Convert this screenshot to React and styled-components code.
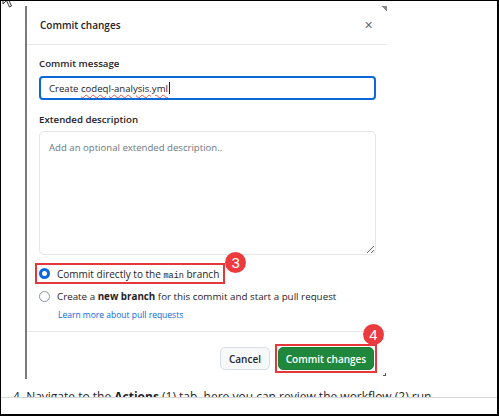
import React from "react";
import styled, { createGlobalStyle } from "styled-components";

const GlobalStyle = createGlobalStyle`
  html, body { margin: 0; padding: 0; background: #ffffff; }
  body { font-family: "Open Sans", "Liberation Sans", sans-serif; color: #1f2328; }
  * { box-sizing: border-box; }
`;

const Frame = styled.div`
  position: relative;
  width: 499px;
  height: 416px;
  border: 1px solid #000;
  border-right-width: 2px;
  border-bottom-width: 2px;
  background: #fff;
  overflow: hidden;
  display: flex;
  flex-direction: column;
`;

const Cursor = styled.svg`
  position: absolute;
  left: 1px;
  top: -12px;
`;

const Dialog = styled.div`
  position: relative;
  width: 362px;
  margin: 5px 0 0 24px;
  border-left: 2px solid #7a7a7a;
  background: #fff;
  &::after {
    content: "";
    position: absolute;
    top: 0;
    right: 0;
    width: 6px;
    height: 5px;
    background: linear-gradient(to bottom left, #8a8a8a 50%, transparent 51%);
  }
  &::before {
    content: "";
    position: absolute;
    bottom: 3px;
    right: 1px;
    width: 2px;
    height: 2px;
    border-right: 1px solid #555;
    border-bottom: 1px solid #555;
  }
`;

const Header = styled.div`
  height: 39px;
  display: flex;
  align-items: center;
  justify-content: space-between;
  padding: 0 14px 1px 13px;
  border-bottom: 1px solid #e5e7ea;
`;

const Title = styled.h1`
  margin: 0;
  font-size: 10px;
  font-weight: 600;
  color: #1f2328;
`;

const Close = styled.span`
  font-size: 11px;
  line-height: 1;
  color: #656d76;
`;

const Body = styled.div`
  padding: 12px 11px 0 12px;
  display: flex;
  flex-direction: column;
`;

const Label = styled.label`
  font-size: 9.7px;
  font-weight: 600;
  line-height: 14px;
  color: #1f2328;
  margin-bottom: ${(p) => p.$gap}px;
`;

const InputBox = styled.div`
  height: 24px;
  border: 2px solid #0969da;
  border-radius: 4px;
  display: flex;
  align-items: center;
  padding-left: 8px;
  font-size: 9.6px;
  color: #1f2328;
  margin-bottom: 13px;
`;

const Squiggle = styled.span`
  text-decoration: underline wavy #e5534b;
  text-decoration-thickness: 1px;
  text-underline-offset: 2px;
`;

const Caret = styled.span`
  display: inline-block;
  width: 1px;
  height: 12px;
  background: #1f2328;
  margin-left: 1px;
  vertical-align: middle;
`;

const TextArea = styled.textarea`
  display: block;
  width: 100%;
  height: 124px;
  border: 1px solid #e3e6ea;
  border-radius: 5px;
  padding: 9px 9px;
  font-family: "Open Sans", "Liberation Sans", sans-serif;
  font-size: 9.6px;
  line-height: 14px;
  color: #1f2328;
  outline: none;
  margin: 0 0 8px 0;
  &::placeholder { color: #6e7781; }
`;

const Options = styled.div`
  display: flex;
  flex-direction: column;
`;

const Highlight = styled.div`
  position: relative;
  align-self: flex-start;
  border: 2px solid #e5383b;
  padding: ${(p) => p.$pad || "0"};
  margin-left: ${(p) => p.$ml || 0}px;
`;

const Badge = styled.span`
  position: absolute;
  top: ${(p) => p.$top}px;
  right: ${(p) => p.$right}px;
  width: 21px;
  height: 21px;
  border-radius: 50%;
  background: #ec3b3f;
  color: #fff;
  font-family: "Liberation Sans", Arial, sans-serif;
  font-size: 15px;
  line-height: 21px;
  text-align: center;
`;

const RadioRow = styled.div`
  display: flex;
  align-items: center;
  height: ${(p) => p.$h}px;
  gap: 7px;
  padding-left: ${(p) => p.$pl}px;
  padding-right: ${(p) => p.$pr || 0}px;
  font-size: ${(p) => p.$fs || 10}px;
  color: #1f2328;
`;

const Radio = styled.span`
  flex: none;
  width: 11px;
  height: 11px;
  border-radius: 50%;
  background: #fff;
  border: ${(p) => (p.$checked ? "3px solid #0969da" : "1px solid #8c959f")};
`;

const Mono = styled.code`
  font-family: "Liberation Mono", "DejaVu Sans Mono", monospace;
  font-size: 8.5px;
`;

const Strong = styled.b`
  font-weight: 700;
`;

const Link = styled.a`
  font-size: 8.5px;
  color: #0969da;
  text-decoration: none;
  padding-left: 19px;
  line-height: 12px;
  margin-top: 1px;
`;

const Footer = styled.div`
  margin-top: 10px;
  border-top: 1px solid #e5e7ea;
  display: flex;
  justify-content: flex-end;
  align-items: center;
  gap: 5px;
  padding: 12px 10px 6px 0;
`;

const Button = styled.button`
  height: 23px;
  width: ${(p) => p.$w}px;
  border-radius: 5px;
  border: 1px solid ${(p) => (p.$primary ? "#1a7f37" : "#d8dee4")};
  background: ${(p) => (p.$primary ? "#1f883d" : "#f6f8fa")};
  color: ${(p) => (p.$primary ? "#ffffff" : "#24292f")};
  font-family: "Open Sans", "Liberation Sans", sans-serif;
  font-size: 10px;
  font-weight: 600;
  padding: 0;
  display: flex;
  align-items: center;
  justify-content: center;
`;

const NoteClip = styled.div`
  margin-top: 9px;
  height: 10px;
  overflow: hidden;
  border-bottom: 1px solid #d6d6d6;
  padding-left: 12px;
`;

const Note = styled.p`
  margin: 0;
  font-size: 12px;
  line-height: 16px;
  color: #1f2328;
  white-space: nowrap;
  padding-top: 1px;
`;

export default function App() {
  return (
    <>
      <GlobalStyle />
      <Frame>
        <Cursor width="14" height="20" viewBox="0 0 14 20">
          <path d="M1 1 L1 15 L4.5 11.5 L7.5 18 L9.5 17 L6.5 10.5 L11 10.5 Z" fill="#fff" stroke="#333" strokeWidth="1" />
        </Cursor>
        <Dialog>
          <Header>
            <Title>Commit changes</Title>
            <Close>✕</Close>
          </Header>
          <Body>
            <Label $gap={5}>Commit message</Label>
            <InputBox>
              Create&nbsp;<Squiggle>codeql-analysis.yml</Squiggle>
              <Caret />
            </InputBox>
            <Label $gap={4}>Extended description</Label>
            <TextArea placeholder="Add an optional extended description.." />
            <Options>
              <Highlight $ml={-4}>
                <RadioRow $h={17} $pl={2} $pr={4}>
                  <Radio $checked />
                  <span>
                    Commit directly to the <Mono>main</Mono> branch
                  </span>
                </RadioRow>
                <Badge $top={-13} $right={-23}>3</Badge>
              </Highlight>
              <RadioRow $h={24} $pl={0} $fs={9.8}>
                <Radio />
                <span>
                  Create a <Strong>new branch</Strong> for this commit and start a pull request
                </span>
              </RadioRow>
              <Link href="#">Learn more about pull requests</Link>
            </Options>
          </Body>
          <Footer>
            <Button $w={50}>Cancel</Button>
            <Highlight $pad="1px">
              <Button $primary $w={96}>Commit changes</Button>
              <Badge $top={-22} $right={-9}>4</Badge>
            </Highlight>
          </Footer>
        </Dialog>
        <NoteClip>
          <Note>
            4. Navigate to the <Strong>Actions</Strong> (1) tab, here you can review the workflow (2) run.
          </Note>
        </NoteClip>
      </Frame>
    </>
  );
}
